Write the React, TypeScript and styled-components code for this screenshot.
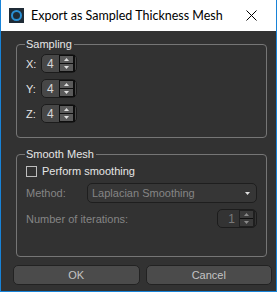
import styled, { createGlobalStyle } from 'styled-components'

const GlobalStyle = createGlobalStyle`
  html, body {
    margin: 0;
    padding: 0;
    background: #ffffff;
  }
  * {
    box-sizing: border-box;
  }
`

const Window = styled.div`
  width: 277px;
  height: 292px;
  display: flex;
  flex-direction: column;
  border: 1px solid #1883d7;
  border-top: none;
  background: #323232;
  font-family: 'Liberation Sans', Arial, sans-serif;
  font-size: 11px;
`

const TitleBar = styled.div`
  height: 31px;
  flex: none;
  display: flex;
  align-items: center;
  background: #ffffff;
  padding-left: 8px;
  font-family: Lato, 'Noto Sans', sans-serif;
  font-size: 12px;
  color: #000000;
  white-space: nowrap;
`

const AppIcon = styled.div`
  width: 15px;
  height: 15px;
  background: #1f2b36;
  display: flex;
  align-items: center;
  justify-content: center;
  margin-right: 7px;
  margin-top: -1px;
  span {
    width: 11px;
    height: 11px;
    border-radius: 50%;
    border: 2px solid #2a8fd4;
  }
`

const Title = styled.div`
  flex: 1;
  margin-top: -1px;
  font-size: 12.5px;
`

const CloseButton = styled.div`
  width: 46px;
  height: 100%;
  display: flex;
  align-items: center;
  justify-content: center;
  margin-right: 2px;
`

const Body = styled.div`
  flex: 1;
  display: flex;
  flex-direction: column;
  padding: 6px 9px 0 15px;
`

const Group = styled.fieldset<{ $height: number; $gap: number }>`
  margin: 0 0 9px 0;
  height: ${({ $height }) => $height}px;
  border: 1px solid #767676;
  border-radius: 4px;
  padding: 2px 9px 0 9px;
  display: flex;
  flex-direction: column;
  gap: ${({ $gap }) => $gap}px;
`

const Legend = styled.legend`
  color: #e6e6e6;
  font-size: 11px;
  line-height: 14px;
  padding: 0 2px 0 1px;
  margin-left: -1px;
`

const Row = styled.div<{ $top?: number }>`
  display: flex;
  align-items: center;
  margin-top: ${({ $top }) => $top ?? 0}px;
`

const Label = styled.span<{ $width?: number; $disabled?: boolean }>`
  width: ${({ $width }) => ($width ? `${$width}px` : 'auto')};
  flex: ${({ $width }) => ($width ? 'none' : '1')};
  color: ${({ $disabled }) => ($disabled ? '#858585' : '#e6e6e6')};
`

const SpinBox = styled.div<{ $width: number; $disabled?: boolean }>`
  width: ${({ $width }) => $width}px;
  height: 19px;
  border: 1px solid #1c1c1c;
  border-radius: 5px;
  background: ${({ $disabled }) => ($disabled ? '#333333' : '#474747')};
  display: flex;
  align-items: center;
  padding-left: 5px;
  color: ${({ $disabled }) => ($disabled ? '#7a7a7a' : '#d8d8d8')};
  font-size: 12px;
`

const SpinValue = styled.span<{ $right?: boolean }>`
  flex: 1;
  text-align: ${({ $right }) => ($right ? 'right' : 'left')};
  padding-right: ${({ $right }) => ($right ? 4 : 0)}px;
`

const SpinButtons = styled.div<{ $disabled?: boolean }>`
  width: 16px;
  height: 17px;
  display: flex;
  flex-direction: column;
  border: 1px solid ${({ $disabled }) => ($disabled ? '#1f1f1f' : '#0e0e0e')};
  border-right-width: 2px;
  margin-right: 1px;
  background: #0e0e0e;
  gap: 1px;
`

const SpinArrow = styled.div<{ $disabled?: boolean }>`
  flex: 1;
  background: ${({ $disabled }) => ($disabled ? '#3a3a3a' : '#5a5a5a')};
  display: flex;
  align-items: center;
  justify-content: center;
`

const Arrow = ({ up, color }: { up?: boolean; color: string }) => (
  <svg width="5" height="3" viewBox="0 0 5 3">
    <path d={up ? 'M2.5 0 L5 3 L0 3 Z' : 'M0 0 L5 0 L2.5 3 Z'} fill={color} />
  </svg>
)

const Spin = ({ value, width, disabled, right }: { value: string; width: number; disabled?: boolean; right?: boolean }) => (
  <SpinBox $width={width} $disabled={disabled}>
    <SpinValue $right={right}>{value}</SpinValue>
    <SpinButtons $disabled={disabled}>
      <SpinArrow $disabled={disabled}>
        <Arrow up color={disabled ? '#8a8a8a' : '#e0e0e0'} />
      </SpinArrow>
      <SpinArrow $disabled={disabled}>
        <Arrow color={disabled ? '#8a8a8a' : '#e0e0e0'} />
      </SpinArrow>
    </SpinButtons>
  </SpinBox>
)

const CheckBox = styled.span`
  width: 11px;
  height: 11px;
  border: 1px solid #bdbdbd;
  margin-right: 5px;
  flex: none;
`

const Combo = styled.div`
  width: 170px;
  height: 20px;
  border: 1px solid #1e1e1e;
  border-radius: 5px;
  background: #363636;
  display: flex;
  align-items: center;
  padding: 0 6px 0 4px;
  color: #858585;
  font-size: 11px;
`

const ComboText = styled.span`
  flex: 1;
`

const ButtonRow = styled.div`
  display: flex;
  gap: 6px;
  margin: -1px -5px 0 -3px;
`

const Button = styled.div`
  flex: 1;
  height: 20px;
  border: 1px solid #222222;
  border-radius: 5px;
  background: #4b4b4b;
  color: #c4c4c4;
  display: flex;
  align-items: center;
  justify-content: center;
  font-size: 11px;
`

export default function App() {
  return (
    <>
      <GlobalStyle />
      <Window>
        <TitleBar>
          <AppIcon>
            <span />
          </AppIcon>
          <Title>Export as Sampled Thickness Mesh</Title>
          <CloseButton>
            <svg width="11" height="11" viewBox="0 0 11 11">
              <path d="M0.5 0.5 L10.5 10.5 M10.5 0.5 L0.5 10.5" stroke="#000" strokeWidth="1" />
            </svg>
          </CloseButton>
        </TitleBar>
        <Body>
          <Group $height={101} $gap={6}>
            <Legend>Sampling</Legend>
            {['X:', 'Y:', 'Z:'].map((axis, i) => (
              <Row key={axis} $top={i === 0 ? 1 : 0}>
                <Label $width={15}>{axis}</Label>
                <Spin value="4" width={36} />
              </Row>
            ))}
          </Group>
          <Group $height={110} $gap={6}>
            <Legend>Smooth Mesh</Legend>
            <Row $top={2}>
              <CheckBox />
              <Label>Perform smoothing</Label>
            </Row>
            <Row>
              <Label $width={61} $disabled>Method:</Label>
              <Combo>
                <ComboText>Laplacian Smoothing</ComboText>
                <Arrow color="#e0e0e0" />
              </Combo>
            </Row>
            <Row>
              <Label $disabled>Number of iterations:</Label>
              <Spin value="1" width={40} disabled right />
            </Row>
          </Group>
          <ButtonRow>
            <Button>OK</Button>
            <Button>Cancel</Button>
          </ButtonRow>
        </Body>
      </Window>
    </>
  )
}
